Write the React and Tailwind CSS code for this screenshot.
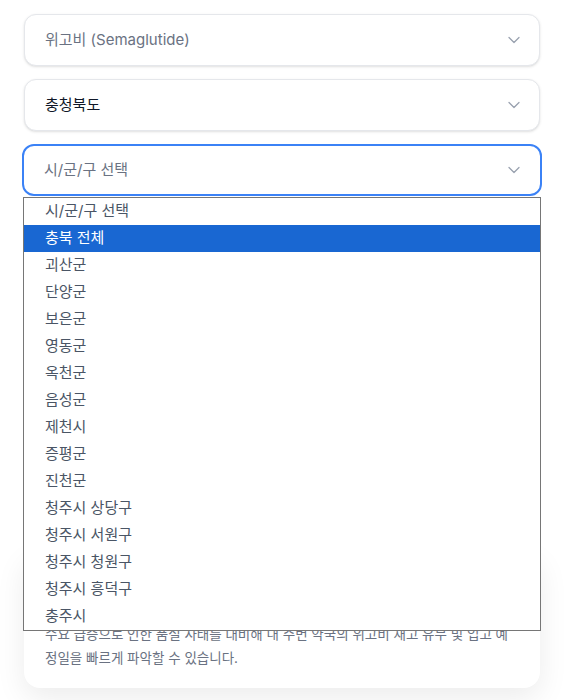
import React from 'react';
import { ChevronDown } from 'lucide-react';

const districts = [
  '시/군/구 선택',
  '충북 전체',
  '괴산군',
  '단양군',
  '보은군',
  '영동군',
  '옥천군',
  '음성군',
  '제천시',
  '증평군',
  '진천군',
  '청주시 상당구',
  '청주시 서원구',
  '청주시 청원구',
  '청주시 흥덕구',
  '충주시',
];

const SelectBox = ({ label, tone, focused }) => (
  <div
    className={`h-[52px] flex items-center justify-between bg-white rounded-xl pl-5 ${
      focused
        ? 'border-2 border-[#3b82f6] -mx-[2px] pl-[20px] pr-[16px]'
        : 'border border-gray-200 shadow-sm pr-[15px]'
    }`}
  >
    <span className={`text-[15px] ${tone}`}>{label}</span>
    <ChevronDown size={20} strokeWidth={1.5} className="text-gray-400" />
  </div>
);

const App = () => {
  return (
    <div
      className="min-h-[700px] bg-white pl-6 pt-[14px]"
      style={{ fontFamily: 'Inter, "Noto Sans CJK KR", sans-serif' }}
    >
      <div className="relative w-[516px]">
        {/* FILTERS */}
        <div className="flex flex-col gap-[13px]">
          <SelectBox label="위고비 (Semaglutide)" tone="text-gray-500" />
          <SelectBox label="충청북도" tone="text-gray-900" />
          <SelectBox label="시/군/구 선택" tone="text-gray-500" focused />
        </div>

        {/* result area, covered by the open list */}
        <div className="h-[356px]"></div>

        {/* INFO CARD */}
        <div className="bg-white rounded-2xl shadow-[0_10px_30px_rgba(0,0,0,0.08)] px-[21px] pt-[70px] pb-[18px]">
          <p className="text-[13.5px] leading-6 text-gray-500">
            수요 급증으로 인한 품절 사태를 대비해 내 주변 약국의 위고비 재고 유무 및 입고 예정일을 빠르게 파악할 수 있습니다.
          </p>
        </div>

        {/* OPEN NATIVE LIST */}
        <ul className="absolute left-[-1px] right-[-1px] top-[183px] bg-white border border-[#767676] z-10">
          {districts.map((d, i) => (
            <li
              key={d}
              className={`h-[27px] flex items-center pl-[21px] text-[15px] ${
                i === 1 ? 'bg-[#1967d2] text-white' : 'text-gray-600'
              }`}
            >
              {d}
            </li>
          ))}
        </ul>
      </div>
    </div>
  );
};

export default App;
